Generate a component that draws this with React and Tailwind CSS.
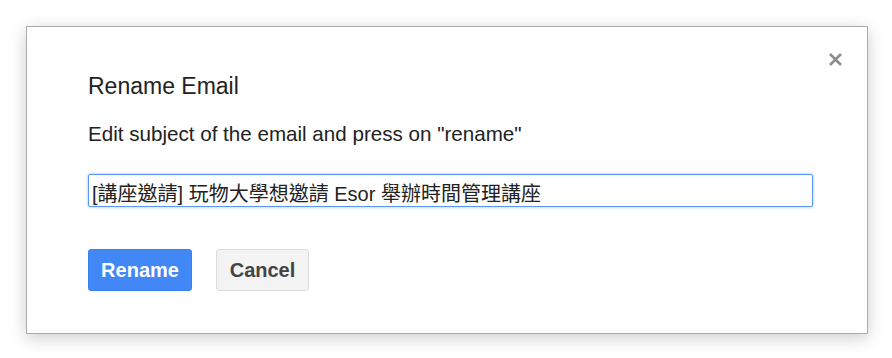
import React from "react";

const FONT = { fontFamily: '"Liberation Sans", Arial, "Noto Sans CJK TC", sans-serif' };

export default function App() {
  return (
    <div className="w-[892px] h-[358px] bg-white pt-[26px] pl-[26px]" style={FONT}>
      <div className="relative w-[842px] border border-[#acacac] bg-white shadow-[0_4px_16px_rgba(0,0,0,0.2)] pl-[61px] pt-[46px] pb-[42px]">
        <button className="absolute right-[24px] top-[25px] w-[15px] h-[15px] flex items-center justify-center" aria-label="Close">
          <svg width="15" height="15" viewBox="0 0 15 15">
            <path d="M2 2 L13 13 M13 2 L2 13" stroke="#8c8c8c" strokeWidth="2.6" strokeLinecap="butt" />
          </svg>
        </button>
        <div className="text-[23px] leading-[26px] text-[#222222]">Rename Email</div>
        <div className="mt-[23px] text-[20.6px] leading-[24px] text-[#222222]">
          Edit subject of the email and press on "rename"
        </div>
        <input
          readOnly
          defaultValue="[講座邀請] 玩物大學想邀請 Esor 舉辦時間管理講座"
          className="mt-[28px] block w-[725px] h-[33px] border border-[#5b96f4] rounded-[2px] shadow-[0_0_3px_rgba(77,144,254,0.6)] pl-[3px] pt-[4px] pb-0 text-[20px] leading-[27px] text-[#222222] outline-none"
          style={FONT}
        />
        <div className="mt-[42px] flex gap-[24px]">
          <button
            className="h-[42px] w-[104px] rounded-[3px] border border-[#3a80f2] bg-[#4187f6] text-white font-bold text-[20px] leading-[38px]"
            style={FONT}
          >
            Rename
          </button>
          <button
            className="h-[42px] w-[93px] rounded-[3px] border border-[#dcdcdc] bg-[#f3f3f3] text-[#444444] font-bold text-[20px] leading-[38px]"
            style={FONT}
          >
            Cancel
          </button>
        </div>
      </div>
    </div>
  );
}
